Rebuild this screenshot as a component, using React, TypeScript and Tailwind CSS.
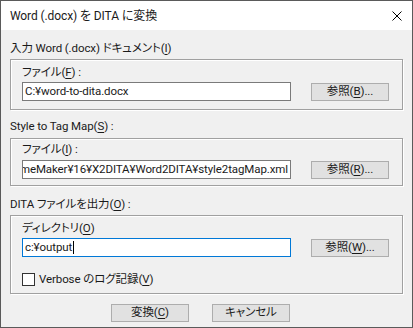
import React from 'react';

const font = { fontFamily: 'Roboto, "Noto Sans CJK JP", sans-serif' };

const Key: React.FC<{ k: string }> = ({ k }) => (
  <>
    (<span className="underline underline-offset-2">{k}</span>)
  </>
);

const Button: React.FC<{ children: React.ReactNode; className?: string }> = ({ children, className }) => (
  <div
    className={`h-[18px] w-[78px] flex items-center justify-center border border-[#adadad] bg-[#e1e1e1] leading-none ${className ?? ''}`}
  >
    {children}
  </div>
);

const Field: React.FC<{ value: string; focused?: boolean; caret?: boolean; alignEnd?: boolean }> = ({
  value,
  focused,
  caret,
  alignEnd,
}) => (
  <div
    className={`h-[19px] w-[269px] shrink-0 flex items-center overflow-hidden whitespace-nowrap bg-white border px-[2px] leading-none ${
      focused ? 'border-[#0078d7]' : 'border-[#7a7a7a]'
    } ${alignEnd ? 'justify-end' : ''}`}
  >
    <span className="shrink-0">{value}</span>
    {caret && <span className="ml-px inline-block h-[13px] w-px bg-black" />}
  </div>
);

const Group: React.FC<{ children: React.ReactNode; className?: string }> = ({ children, className }) => (
  <div
    className={`border border-[#a0a0a0] shadow-[inset_1px_1px_0_#fff,1px_1px_0_#fff] pl-[11px] ${className ?? ''}`}
  >
    {children}
  </div>
);

export default function App() {
  return (
    <div
      className="w-[413px] h-[328px] box-border border border-[#5a5a5a] bg-[#f0f0f0] text-[#1a1a1a] text-[11.5px] tracking-[-0.1px] flex flex-col [font-feature-settings:'palt']"
      style={font}
    >
      <div className="h-[29px] bg-white flex items-center justify-between pl-[9px] pr-[10px] text-[12px]">
        <span>Word (.docx) を DITA に変換</span>
        <svg width="10" height="10" viewBox="0 0 10 10">
          <path d="M0.5 0.5 L9.5 9.5 M9.5 0.5 L0.5 9.5" stroke="#000" strokeWidth="1" fill="none" />
        </svg>
      </div>

      <div className="flex flex-col pl-[9px] pr-[9px] leading-[16px]">
        <div className="mt-[10px] h-[16px]">
          入力 Word (.docx) ドキュメント<Key k="I" />
        </div>
        <Group className="mt-[3px] h-[51px] pt-[4px]">
          <div className="h-[16px]">
            ファイル<Key k="F" /> :
          </div>
          <div className="mt-[2px] flex items-center gap-[20px]">
            <Field value="C:¥word-to-dita.docx" />
            <Button>
              参照<Key k="B" />...
            </Button>
          </div>
        </Group>

        <div className="mt-[8px] h-[16px]">
          Style to Tag Map<Key k="S" /> :
        </div>
        <Group className="mt-[4px] h-[48px] pt-[2px]">
          <div className="h-[16px]">
            ファイル<Key k="I" /> :
          </div>
          <div className="mt-[3px] flex items-center gap-[20px]">
            <Field value="FrameMaker¥16¥X2DITA¥Word2DITA¥style2tagMap.xml" alignEnd />
            <Button>
              参照<Key k="R" />...
            </Button>
          </div>
        </Group>

        <div className="mt-[10px] h-[16px]">
          DITA ファイルを出力<Key k="O" /> :
        </div>
        <Group className="mt-[3px] h-[79px] pt-[4px]">
          <div className="h-[16px]">
            ディレクトリ<Key k="O" />
          </div>
          <div className="mt-[2px] flex items-center gap-[20px]">
            <Field value="c:¥output" focused caret />
            <Button>
              参照<Key k="W" />...
            </Button>
          </div>
          <div className="mt-[14px] flex items-center gap-[4px]">
            <div className="h-[13px] w-[13px] border border-[#333] bg-white" />
            <span>
              Verbose のログ記録<Key k="V" />
            </span>
          </div>
        </Group>

        <div className="mt-[10px] flex justify-center gap-[23px] pr-[12px]">
          <Button>
            変換<Key k="C" />
          </Button>
          <Button>キャンセル</Button>
        </div>
      </div>
    </div>
  );
}
